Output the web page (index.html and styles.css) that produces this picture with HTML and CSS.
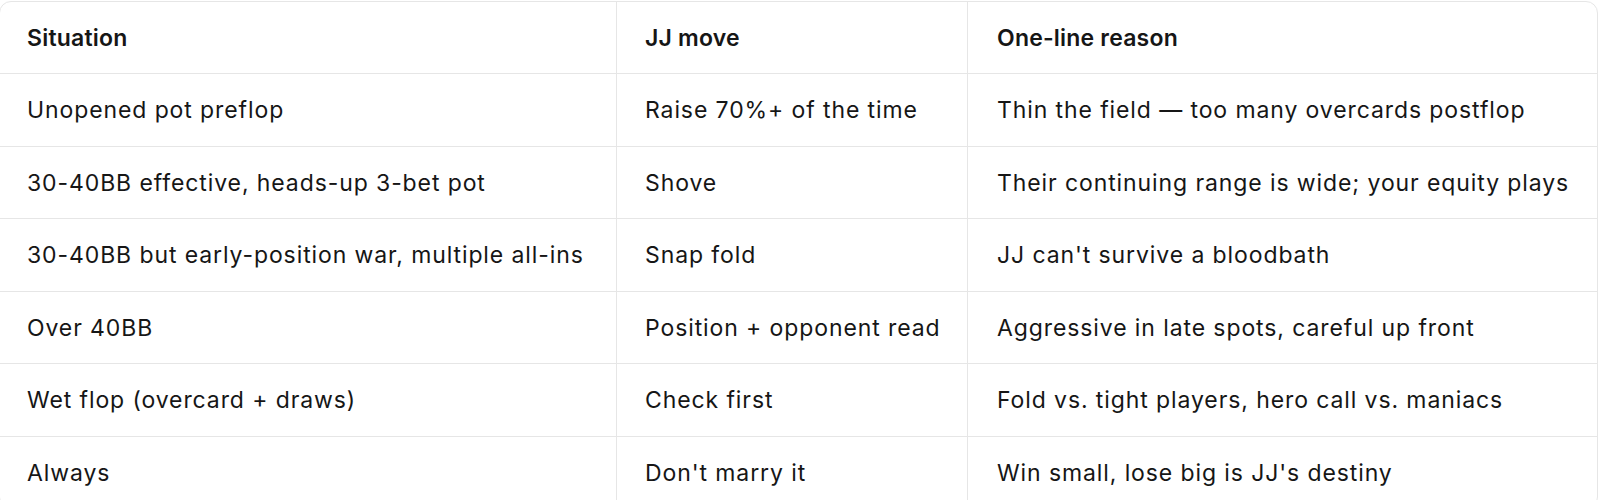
FILE: index.html
```html
<!DOCTYPE html>
<html>
<head>
<meta charset="utf-8">
<link rel="stylesheet" href="styles.css">
</head>
<body>
<div class="table">
  <div class="row head">
    <div class="cell">Situation</div>
    <div class="cell">JJ move</div>
    <div class="cell">One-line reason</div>
  </div>
  <div class="row">
    <div class="cell">Unopened pot preflop</div>
    <div class="cell">Raise 70%+ of the time</div>
    <div class="cell">Thin the field — too many overcards postflop</div>
  </div>
  <div class="row">
    <div class="cell">30-40BB effective, heads-up 3-bet pot</div>
    <div class="cell">Shove</div>
    <div class="cell">Their continuing range is wide; your equity plays</div>
  </div>
  <div class="row">
    <div class="cell">30-40BB but early-position war, multiple all-ins</div>
    <div class="cell">Snap fold</div>
    <div class="cell">JJ can't survive a bloodbath</div>
  </div>
  <div class="row">
    <div class="cell">Over 40BB</div>
    <div class="cell">Position + opponent read</div>
    <div class="cell">Aggressive in late spots, careful up front</div>
  </div>
  <div class="row">
    <div class="cell">Wet flop (overcard + draws)</div>
    <div class="cell">Check first</div>
    <div class="cell">Fold vs. tight players, hero call vs. maniacs</div>
  </div>
  <div class="row last">
    <div class="cell">Always</div>
    <div class="cell">Don't marry it</div>
    <div class="cell">Win small, lose big is JJ's destiny</div>
  </div>
</div>
</body>
</html>
```

FILE: styles.css
```css
html, body {
  margin: 0;
  padding: 0;
  background: #ffffff;
}
body {
  font-family: Inter, "Noto Sans", sans-serif;
  color: #161616;
}
.table {
  margin: 1px 0 0 -1px;
  width: 1597px;
  border: 1px solid #e6e6e6;
  border-radius: 12px;
  overflow: hidden;
}
.row {
  display: grid;
  grid-template-columns: 617px 351px 1fr;
  height: 71.5px;
  border-bottom: 1px solid #e6e6e6;
}
.row.head {
  height: 71.3px;
}
.row.last {
  border-bottom: none;
}
.cell {
  display: flex;
  align-items: center;
  padding-left: 28px;
  font-size: 23px;
  letter-spacing: 0.9px;
  border-right: 1px solid #e6e6e6;
  white-space: nowrap;
}
.cell:first-child {
  padding-left: 27px;
}
.cell:last-child {
  border-right: none;
  padding-left: 29px;
}
.head .cell {
  font-weight: 600;
  letter-spacing: 0.2px;
}
```
